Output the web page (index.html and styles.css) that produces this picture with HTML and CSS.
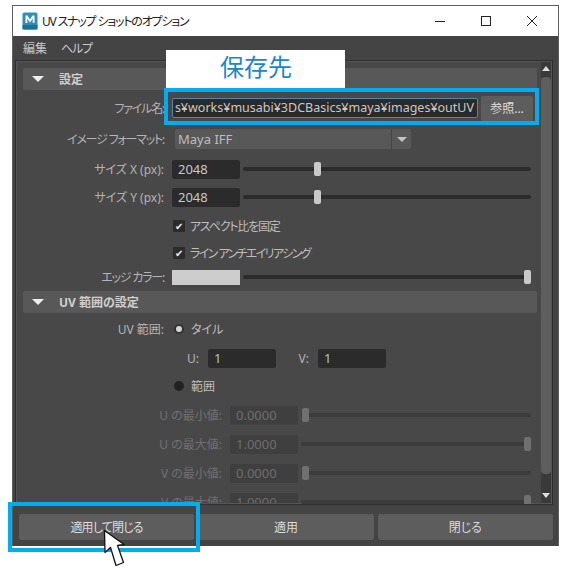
FILE: index.html
```html
<!DOCTYPE html>
<html lang="ja">
<head>
    <meta charset="UTF-8">
    <title>UV スナップ ショットのオプション</title>
    <link rel="stylesheet" href="styles.css">
</head>
<body>
    <div class="window">
        <div class="titlebar">
            <svg class="logo" width="16" height="18" viewBox="0 0 16 18">
                <rect x="0.5" y="0.5" width="15" height="17" rx="2" fill="#2f8fb5"/>
                <rect x="0.5" y="13" width="15" height="4.5" fill="#1f6f92"/>
                <path d="M3.5 11V3.5H5.5L8 7.5L10.5 3.5H12.5V11H10.7V6.5L8 10.5L5.3 6.5V11Z" fill="#fff"/>
            </svg>
            <span class="title kana">UV スナップ ショットのオプション</span>
            <div class="winbtns">
                <svg width="12" height="12" viewBox="0 0 12 12"><path d="M1 6.5H11" stroke="#222" fill="none"/></svg>
                <svg width="12" height="12" viewBox="0 0 12 12"><rect x="1.5" y="1.5" width="9" height="9" stroke="#222" fill="none"/></svg>
                <svg width="12" height="12" viewBox="0 0 12 12"><path d="M1 1L11 11M11 1L1 11" stroke="#222" fill="none"/></svg>
            </div>
        </div>

        <div class="menubar">
            <span>編集</span>
            <span class="kana">ヘルプ</span>
        </div>

        <div class="frame">
            <div class="panel">
                <div class="section"><i class="tri"></i>設定</div>

                <div class="row gap8">
                    <label class="kana">ファイル名:</label>
                    <div class="path"><span>s¥works¥musabi¥3DCBasics¥maya¥images¥outUV</span></div>
                    <button class="browse">参照...</button>
                </div>
                <div class="row gap11">
                    <label class="kana">イメージ フォーマット:</label>
                    <div class="select"><span>Maya IFF</span><b><i class="tri small"></i></b></div>
                </div>
                <div class="row gap10">
                    <label>サイズ X (px):</label>
                    <div class="field">2048</div>
                    <div class="slider"><i class="thumb at-quarter"></i></div>
                </div>
                <div class="row gap8">
                    <label>サイズ Y (px):</label>
                    <div class="field">2048</div>
                    <div class="slider"><i class="thumb at-quarter"></i></div>
                </div>
                <div class="row gap9">
                    <label></label>
                    <div class="check kana"><i class="box">✔</i>アスペクト比を固定</div>
                </div>
                <div class="row gap7">
                    <label></label>
                    <div class="check kana wide"><i class="box">✔</i>ライン アンチエイリアシング</div>
                </div>
                <div class="row gap4">
                    <label class="kana">エッジ カラー:</label>
                    <div class="swatch"></div>
                    <div class="slider"><i class="thumb at-end"></i></div>
                </div>

                <div class="section gap4"><i class="tri"></i>UV 範囲の設定</div>

                <div class="row gap6">
                    <label>UV 範囲:</label>
                    <div class="check"><i class="radio on"></i>タイル</div>
                </div>
                <div class="row gap9">
                    <label class="short">U:</label>
                    <div class="field bright">1</div>
                    <label class="v">V:</label>
                    <div class="field bright">1</div>
                </div>
                <div class="row gap8">
                    <label></label>
                    <div class="check"><i class="radio"></i>範囲</div>
                </div>
                <div class="row gap9 off">
                    <label class="long">U の最小値:</label>
                    <div class="field">0.0000</div>
                    <div class="slider"><i class="thumb"></i></div>
                </div>
                <div class="row gap9 off">
                    <label class="long">U の最大値:</label>
                    <div class="field">1.0000</div>
                    <div class="slider"><i class="thumb at-end"></i></div>
                </div>
                <div class="row gap9 off">
                    <label class="long">V の最小値:</label>
                    <div class="field">0.0000</div>
                    <div class="slider"><i class="thumb"></i></div>
                </div>
                <div class="row gap9 off">
                    <label class="long">V の最大値:</label>
                    <div class="field">1.0000</div>
                    <div class="slider"><i class="thumb at-end"></i></div>
                </div>
            </div>

            <div class="scrollbar">
                <i class="arrow up"></i>
                <div class="scroll-thumb"></div>
                <i class="arrow"></i>
            </div>
        </div>

        <div class="actions">
            <button class="tight">適用して閉じる</button>
            <button>適用</button>
            <button>閉じる</button>
        </div>
    </div>

    <div class="tag">保存先</div>
    <div class="mark mark-path"></div>
    <div class="mark mark-apply"></div>
    <svg class="cursor" width="24" height="40" viewBox="0 0 24 40">
        <path d="M1.5 1.5L2 23.5L7.5 18.5L13 36.5L20.5 33.5L14.5 16.5L21 15.5Z" fill="#fff" stroke="#111" stroke-width="1.3" stroke-linejoin="round"/>
    </svg>
</body>
</html>
```

FILE: styles.css
```css
* {
	margin: 0;
	padding: 0;
	box-sizing: border-box;
}
body {
	background: #fff;
	font-family: "Noto Sans", "Noto Sans CJK JP", sans-serif;
	font-size: 12px;
	font-feature-settings: "palt";
	height: 570px;
	overflow: hidden;
	position: relative;
}
i {
	font-style: normal;
}
.kana {
	letter-spacing: -1.2px;
}
.kana.wide {
	letter-spacing: -1.6px;
}
.window {
	margin: 5px 0 0 12px;
	width: 547px;
	height: 541px;
	background: #444;
	border: 1px solid #5e5e5e;
	border-bottom: none;
	display: flex;
	flex-direction: column;
}
.titlebar {
	height: 30px;
	background: #fff;
	display: flex;
	align-items: center;
	padding-left: 9px;
	flex-shrink: 0;
}
.title {
	margin-left: 4px;
	color: #222;
	font-size: 12px;
}
.winbtns {
	margin-left: auto;
	display: flex;
	gap: 34px;
	padding-right: 20px;
}
.menubar {
	height: 24px;
	display: flex;
	gap: 14px;
	align-items: center;
	padding-left: 10px;
	color: #c8c8c8;
	flex-shrink: 0;
}
.frame {
	height: 445px;
	margin: 0 5px 0 2px;
	border: 1px solid #2e2e2e;
	outline: 1px solid #555;
	outline-offset: -2px;
	padding: 7px 1px 0 7px;
	display: flex;
	background: #484848;
	overflow: hidden;
	flex-shrink: 0;
}
.panel {
	width: 514px;
	flex-shrink: 0;
}
.section {
	height: 22px;
	background: #585858;
	border-radius: 2px;
	color: #cfcfcf;
	font-weight: bold;
	display: flex;
	align-items: center;
	padding-left: 9px;
}
.tri {
	width: 0;
	height: 0;
	border-left: 6px solid transparent;
	border-right: 6px solid transparent;
	border-top: 6px solid #eee;
	margin-right: 15px;
}
.tri.small {
	border-left-width: 5px;
	border-right-width: 5px;
	border-top-width: 5px;
	border-top-color: #c4c4c4;
	margin: 0;
}
.row {
	height: 20px;
	display: flex;
	align-items: center;
	color: #b4b4b4;
}
.gap4 { margin-top: 4px; }
.gap6 { margin-top: 6px; }
.gap7 { margin-top: 7px; }
.gap8 { margin-top: 8px; }
.gap9 { margin-top: 9px; }
.gap10 { margin-top: 10px; }
.gap11 { margin-top: 11px; }
label {
	width: 141px;
	margin-right: 8px;
	text-align: right;
	white-space: nowrap;
	flex-shrink: 0;
}
label.short {
	width: 176px;
	margin-right: 9px;
}
label.v {
	width: 33px;
	margin-right: 9px;
}
label.long {
	width: 199px;
}
.path {
	width: 306px;
	height: 20px;
	background: #2a2a2a;
	border: 1px solid #5285a6;
	border-radius: 2px;
	color: #c8c8c8;
	font-size: 12.5px;
	line-height: 17px;
	overflow: hidden;
	display: flex;
	justify-content: flex-end;
	white-space: nowrap;
	padding-right: 3px;
}
.browse {
	width: 52px;
	height: 25px;
	margin-left: 3px;
	font: inherit;
}
button {
	background: #5d5d5d;
	border: none;
	border-radius: 2px;
	color: #dcdcdc;
	font: inherit;
	font-feature-settings: "palt";
}
button.tight {
	letter-spacing: -0.8px;
}
.select {
	width: 236px;
	height: 20px;
	margin-left: 3px;
	background: #585858;
	border-radius: 2px;
	color: #bdbdbd;
	font-size: 13px;
	display: flex;
	align-items: center;
	justify-content: space-between;
	padding-left: 3px;
}
.select b {
	width: 20px;
	height: 20px;
	border-left: 1px solid #444;
	display: flex;
	align-items: center;
	justify-content: center;
}
.field {
	width: 68px;
	height: 19px;
	background: #2b2b2b;
	border-radius: 2px;
	color: #c8c8c8;
	font-size: 13px;
	line-height: 19px;
	padding-left: 6px;
	flex-shrink: 0;
}
.field.bright {
	color: #a9c4d6;
}
.swatch {
	width: 68px;
	height: 15px;
	background: #cdcdcd;
}
.slider {
	flex: 1;
	margin: 0 6px 0 3px;
	height: 4px;
	background: #2b2b2b;
	border-radius: 2px;
	position: relative;
}
.thumb {
	position: absolute;
	left: 1px;
	top: -5px;
	width: 7px;
	height: 14px;
	background: #c9c9c9;
	border-radius: 2px;
}
.thumb.at-quarter {
	left: 71px;
}
.thumb.at-end {
	left: auto;
	right: 0;
}
.check {
	display: flex;
	align-items: center;
	color: #bdbdbd;
}
.box {
	width: 12px;
	height: 12px;
	margin: 0 5px 0 1px;
	background: #2b2b2b;
	color: #eee;
	font-size: 10px;
	letter-spacing: 0;
	line-height: 12px;
	text-align: center;
	border-radius: 1px;
}
.radio {
	width: 10px;
	height: 10px;
	margin: 0 7px 0 2px;
	background: #222;
	border-radius: 50%;
}
.radio.on {
	background: #d8d8d8;
	border: 2px solid #333;
}
.off {
	color: #707070;
}
.off .field {
	background: #3f3f3f;
	color: #6e6e6e;
}
.off .slider {
	background: #3c3c3c;
}
.off .thumb {
	background: #707070;
}
.scrollbar {
	width: 12px;
	margin: -7px 0 0 4px;
	background: #3a3a3a;
	display: flex;
	flex-direction: column;
	align-items: center;
}
.scroll-thumb {
	width: 10px;
	height: 397px;
	margin: 6px 0 19px;
	background: #5e5e5e;
	border-radius: 4px;
}
.arrow {
	width: 0;
	height: 0;
	border-left: 4.5px solid transparent;
	border-right: 4.5px solid transparent;
	border-top: 5px solid #ddd;
}
.arrow.up {
	border-top: none;
	border-bottom: 5px solid #ddd;
	margin-top: 5px;
}
.actions {
	display: flex;
	gap: 4px;
	padding: 9px 5px 0 6px;
}
.actions button {
	height: 26px;
	flex: 1;
}
/* annotations drawn over the screenshot */
.tag {
	position: absolute;
	left: 166px;
	top: 50px;
	width: 179px;
	height: 39px;
	background: #fff;
	color: #1b86c9;
	font-family: "Noto Sans CJK JP", sans-serif;
	font-feature-settings: normal;
	font-size: 24px;
	line-height: 32px;
	padding-left: 54px;
}
.mark {
	position: absolute;
	border: 4px solid #00aeef;
}
.mark-path {
	left: 164px;
	top: 88px;
	width: 375px;
	height: 37px;
}
.mark-apply {
	left: 8px;
	top: 502px;
	width: 192px;
	height: 50px;
}
.cursor {
	position: absolute;
	left: 103px;
	top: 529px;
}
```
